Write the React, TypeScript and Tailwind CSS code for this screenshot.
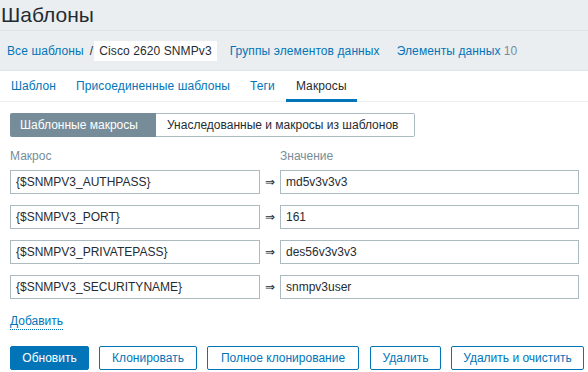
import React from 'react';

const macros = [
  { name: '{$SNMPV3_AUTHPASS}', value: 'md5v3v3v3' },
  { name: '{$SNMPV3_PORT}', value: '161' },
  { name: '{$SNMPV3_PRIVATEPASS}', value: 'des56v3v3v3' },
  { name: '{$SNMPV3_SECURITYNAME}', value: 'snmpv3user' },
];

const tabs = ['Шаблон', 'Присоединенные шаблоны', 'Теги', 'Макросы'];

const actions = [
  { label: 'Обновить', w: 'w-[79px]', primary: true },
  { label: 'Клонировать', w: 'w-[98px]' },
  { label: 'Полное клонирование', w: 'w-[152px]' },
  { label: 'Удалить', w: 'w-[71px]' },
  { label: 'Удалить и очистить', w: 'w-[133px]' },
];

export default function App() {
  return (
    <div className="w-[588px] h-[372px] bg-white text-[12px] text-[#1f2c33] overflow-hidden" style={{ fontFamily: '"Liberation Sans", Arial, sans-serif' }}>
      {/* Header */}
      <div className="bg-[#ebeef0]">
        <div className="h-[31px] border-b border-[#dfe4e7] flex items-center">
          <h1 className="text-[21px] leading-none font-normal pl-px -mt-[2px]">Шаблоны</h1>
        </div>

        {/* Breadcrumbs */}
        <div className="h-[41px] border-b border-[#dfe4e7] flex items-center pl-[7px] -mt-px pt-px tracking-[0.1px]">
          <a className="text-[#0275b8]">Все шаблоны</a>
          <span className="mx-[6px] text-[#1f2c33]">/</span>
          <span className="bg-white h-[20px] px-[5px] flex items-center -ml-[5px]">Cisco 2620 SNMPv3</span>
          <a className="text-[#0275b8] ml-[13px]">Группы элементов данных</a>
          <a className="text-[#0275b8] ml-[17px]">
            Элементы данных<span className="text-[#768d99] ml-[3px]">10</span>
          </a>
        </div>
      </div>

      {/* Tabs */}
      <div className="h-[31px] border-b border-[#ebeef0] flex items-stretch pl-px tracking-[0.1px]">
        {tabs.map((t, i) => (
          <div
            key={t}
            className={
              'px-[10px] flex items-center relative ' +
              (i === 3 ? 'text-[#1f2c33] ml-[1px]' : 'text-[#0275b8]')
            }
          >
            {t}
            {i === 3 && <div className="absolute left-0 right-0 bottom-[-1px] h-[3px] bg-[#0275b8]" />}
          </div>
        ))}
      </div>

      {/* Content */}
      <div className="px-[10px] pt-[11px]">
        <div className="flex h-[24px]">
          <div className="bg-[#768d99] text-white px-[10px] flex items-center rounded-l-[2px] w-[146px]">Шаблонные макросы</div>
          <div className="border border-[#acbbc2] border-l-0 bg-white px-[11px] flex items-center rounded-r-[2px] w-[259px]">
            Унаследованные и макросы из шаблонов
          </div>
        </div>

        <div className="flex mt-[12px] text-[#768d99] h-[14px] items-center">
          <div className="w-[270px]">Макрос</div>
          <div>Значение</div>
        </div>

        <div className="mt-[7px] flex flex-col gap-[11px]">
          {macros.map((m) => (
            <div key={m.name} className="flex items-center h-[24px]">
              <div className="w-[250px] h-[24px] border border-[#acbbc2] flex items-center px-[5px] shrink-0">{m.name}</div>
              <div className="w-[20px] text-center text-[#1f2c33] shrink-0">⇒</div>
              <div className="w-[299px] h-[24px] border border-[#acbbc2] flex items-center px-[5px] shrink-0">{m.value}</div>
            </div>
          ))}
        </div>

        <div className="mt-[13px] h-[18px]">
          <a className="text-[#0275b8] border-b border-dotted border-[#0275b8] pb-px">Добавить</a>
        </div>

        <div className="flex mt-[16px]">
          {actions.map((a, i) => (
            <button
              key={a.label}
              className={
                'h-[24px] shrink-0 rounded-[2px] border border-[#0275b8] ' +
                a.w +
                (i === 3 ? ' ml-[11px]' : i > 0 ? ' ml-[10px]' : '') +
                (a.primary ? ' bg-[#0275b8] text-white' : ' bg-white text-[#0275b8]')
              }
            >
              {a.label}
            </button>
          ))}
        </div>
      </div>
    </div>
  );
}
